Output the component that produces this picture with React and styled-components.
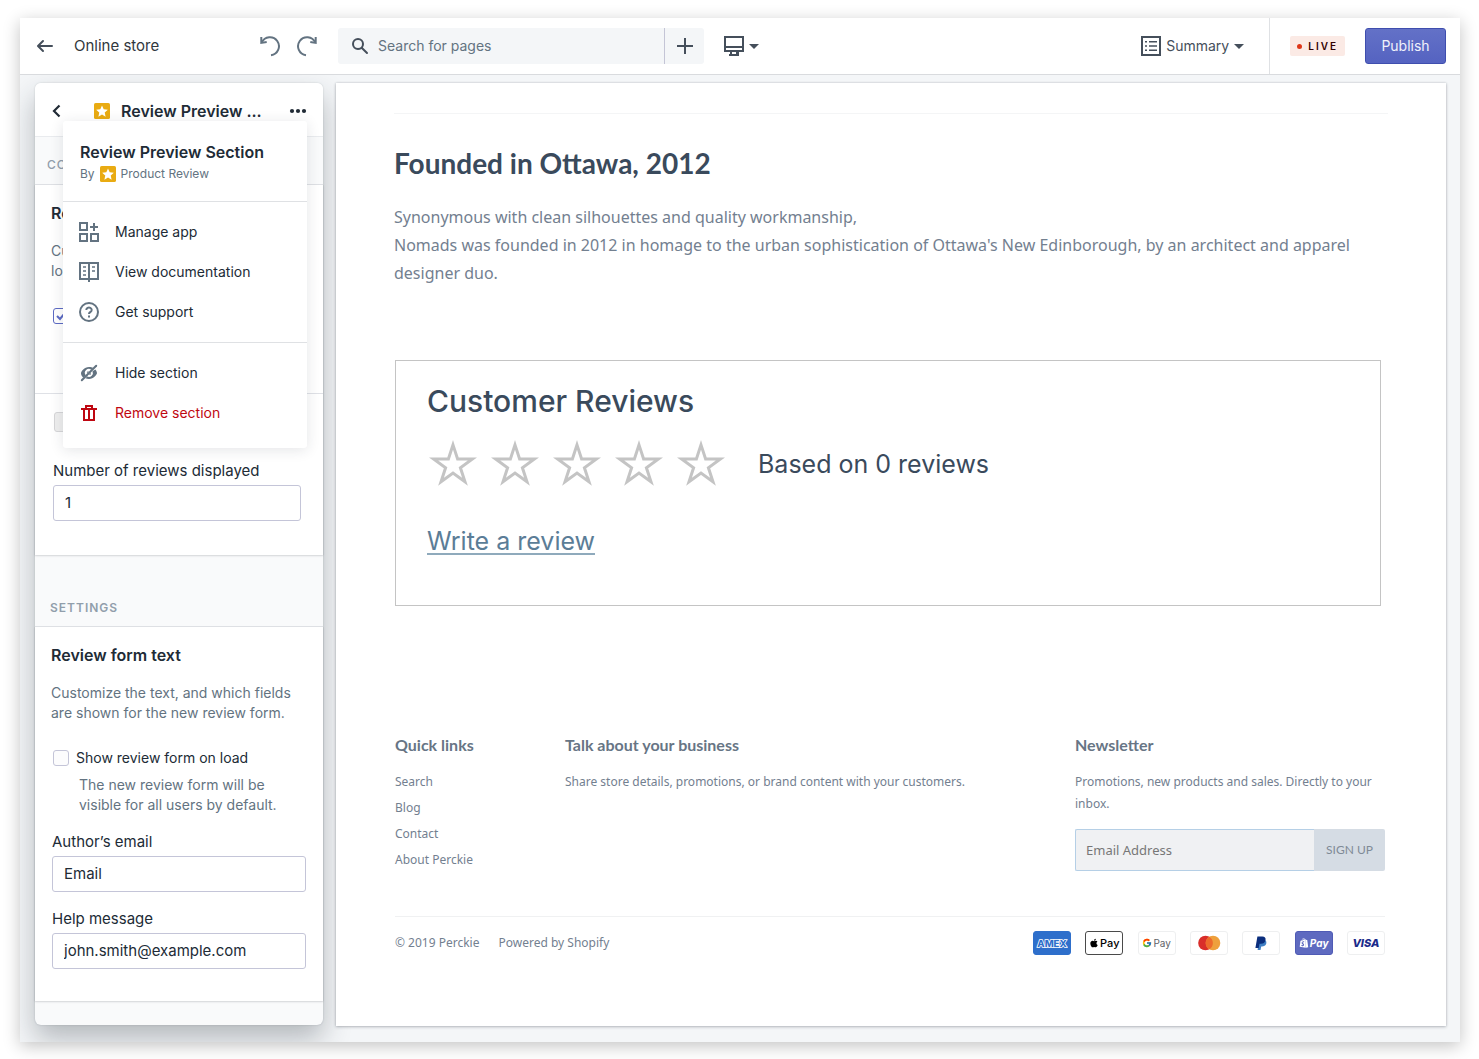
import React from "react";
import styled, { createGlobalStyle, css } from "styled-components";
import { FaApple, FaShopify } from "react-icons/fa";
import { FcGoogle } from "react-icons/fc";

const ui = `Inter, "Liberation Sans", sans-serif`;
const copy = `"Noto Sans", "Open Sans", sans-serif`;
const display = `Lato, "Liberation Sans", sans-serif`;

const Global = createGlobalStyle`
  *, *::before, *::after { box-sizing: border-box; }
  body { margin: 0; background: #fff; color: #212b36; font-family: ${ui}; font-size: 14px; line-height: 20px; }
  h1, h2, h3, p, ul { margin: 0; padding: 0; }
  ul { list-style: none; }
  button, input { font: inherit; color: inherit; margin: 0; }
  button { background: none; border: 0; padding: 0; cursor: pointer; }
  a { color: inherit; text-decoration: none; }
  svg { display: block; flex: none; }
`;

const Page = styled.div`
  min-height: 100vh;
  padding: 18px 19px 17px 20px;
  display: flex;
`;
const Window = styled.div`
  flex: 1;
  min-width: 0;
  display: flex;
  flex-direction: column;
  background: #f4f6f8;
  box-shadow: 0 4px 16px rgba(0, 0, 0, 0.24);
`;

/* top bar */
const TopBar = styled.header`
  display: flex;
  align-items: center;
  height: 57px;
  background: #fff;
  border-bottom: 1px solid #d9dbde;
  padding-right: 14px;
`;
const Back = styled.a`
  display: flex;
  align-items: center;
  gap: 19px;
  width: 240px;
  padding-left: 15px;
  color: #454f5b;
`;
const BackLabel = styled.span`
  color: #31373d;
  font-size: 15px;
`;
const History = styled.div`
  display: flex;
  gap: 15px;
  width: 78px;
  color: #637381;
`;
const SearchBar = styled.div`
  display: flex;
  flex: 0 1 366px;
  height: 36px;
  background: #f4f6f8;
  border-radius: 3px;
  color: #454f5b;
`;
const SearchField = styled.label`
  flex: 1;
  display: flex;
  align-items: center;
  gap: 8px;
  padding: 0 12px;
  border-right: 1px solid #c4c5d6;
`;
const SearchInput = styled.input`
  flex: 1;
  min-width: 0;
  background: none;
  border: 0;
  padding: 0;
  outline: 0;
  &::placeholder { color: #637381; opacity: 1; }
`;
const AddButton = styled.button`
  width: 39px;
  display: grid;
  place-items: center;
`;
const ToolButton = styled.button`
  display: flex;
  align-items: center;
  gap: 5px;
  color: #454f5b;
`;
const DeviceButton = styled(ToolButton)`
  margin-left: 20px;
`;
const BarEnd = styled.div`
  margin-left: auto;
  align-self: stretch;
  display: flex;
  align-items: center;
`;
const Publishing = styled.div`
  align-self: stretch;
  display: flex;
  align-items: center;
  gap: 20px;
  margin-left: 25px;
  padding-left: 20px;
  border-left: 1px solid #dfe1e4;
`;
const Live = styled.span`
  display: flex;
  align-items: center;
  gap: 6px;
  height: 20px;
  padding: 0 7px;
  border-radius: 2px;
  background: #fbeae5;
  color: #330101;
  font-size: 10px;
  font-weight: 600;
  letter-spacing: 2px;
  &::before {
    content: "";
    width: 5px;
    height: 5px;
    border-radius: 50%;
    background: #de3618;
  }
`;
const Publish = styled.button`
  width: 81px;
  height: 36px;
  border: 1px solid #3f4eae;
  border-radius: 3px;
  background: linear-gradient(#6371c7, #5563c1);
  color: #f1f2fb;
`;

/* workspace */
const Workspace = styled.div`
  flex: 1;
  display: flex;
  gap: 13px;
  padding: 8px 14px 16px 15px;
  overflow: hidden;
`;
const Sidebar = styled.aside`
  position: relative;
  flex: none;
  width: 288px;
  display: flex;
  flex-direction: column;
  margin-bottom: 1px;
  border-radius: 6px;
  background: #f9fafb;
  box-shadow: 0 0 2px rgba(33, 43, 54, 0.2), 0 14px 28px rgba(33, 43, 54, 0.3);
`;
const PanelHeader = styled.div`
  display: flex;
  align-items: center;
  height: 53px;
  padding: 3px 15px 0 12px;
  background: #fff;
  border-radius: 6px 6px 0 0;
`;
const IconButton = styled.button`
  width: 20px;
  height: 20px;
  display: grid;
  place-items: center;
  color: #212b36;
`;
const PanelTitle = styled.h1`
  flex: 1;
  display: flex;
  align-items: center;
  gap: 11px;
  margin-left: 27px;
  font-size: 16px;
  font-weight: 600;
  white-space: nowrap;
`;
const Band = styled.h2`
  height: ${(p) => (p.$tall ? 72 : 49)}px;
  padding: 0 ${(p) => (p.$tall ? 15 : 12)}px ${(p) => (p.$tall ? 8 : 9)}px;
  display: flex;
  align-items: flex-end;
  border: solid #e9ebee;
  border-width: ${(p) => (p.$tall ? "0 0 1px" : "1px 0")};
  color: #919eab;
  font-size: 12px;
  font-weight: ${(p) => (p.$tall ? 600 : 500)};
  letter-spacing: 1px;
`;
const Card = styled.section`
  background: #fff;
  box-shadow: 0 0 1px rgba(33, 43, 54, 0.24), 0 1px 2px rgba(33, 43, 54, 0.14);
`;
const Group = styled.div`
  display: flex;
  flex-direction: column;
  padding: 18px 17px 32px 16px;
  & + & { border-top: 1px solid #dfe1e6; }
`;
const OptionsGroup = styled(Group)`
  height: 208px;
`;
const CountGroup = styled(Group)`
  padding: 18px 22px 34px 17px;
  border-top: 1px solid #dfe1e6;
`;
const GroupTitle = styled.h3`
  font-size: 16px;
  font-weight: 600;
`;
const Note = styled.p`
  margin-top: 18px;
  color: #637381;
`;
const Hint = styled.p`
  padding: 7px 0 0 28px;
  color: #637381;
`;
const Check = styled.label`
  display: flex;
  align-items: center;
  gap: 7px;
  margin-top: ${(p) => p.$gap}px;
  padding-left: 2px;
  white-space: nowrap;
`;
const Tick = styled.input`
  appearance: none;
  flex: none;
  width: 16px;
  height: 16px;
  border: 1px solid #c4c5d8;
  border-radius: 3px;
  background: #fcfcfd;
  &:checked {
    border-color: #5c6ac4;
    background: url("data:image/svg+xml,%3Csvg xmlns='http://www.w3.org/2000/svg' viewBox='0 0 14 14'%3E%3Cpath d='M3 7l3 3 5-6' fill='none' stroke='%235c6ac4' stroke-width='2'/%3E%3C/svg%3E") center / 14px no-repeat;
  }
  &:disabled {
    width: 20px;
    height: 20px;
    background: #eee;
    border-color: #d6d6d8;
  }
`;
const Field = styled.label`
  display: flex;
  flex-direction: column;
  gap: 4px;
  margin-top: ${(p) => p.$gap}px;
  padding-left: 1px;
  font-size: 15px;
`;
const TextInput = styled.input`
  height: 36px;
  padding: 0 11px 1px;
  border: 1px solid #c4c5d8;
  border-radius: 3px;
  background: #fff;
`;

/* popover */
const Popover = styled.div`
  position: absolute;
  top: 38px;
  left: 28px;
  right: 16px;
  z-index: 2;
  background: #fff;
  border-radius: 3px;
  box-shadow: 0 2px 14px rgba(33, 43, 54, 0.12);
`;
const PopHeader = styled.div`
  height: 80px;
  padding: 21px 17px 0;
`;
const Byline = styled.p`
  display: flex;
  align-items: center;
  gap: 5px;
  padding-top: 2px;
  color: #637381;
  font-size: 12px;
`;
const Menu = styled.ul`
  padding: 10px 16px;
  border-top: 1px solid #dfe1e4;
  &:last-child { padding-bottom: 15px; }
`;
const MenuItem = styled.button`
  display: flex;
  align-items: center;
  gap: 16px;
  width: 100%;
  height: 40px;
  color: #637381;
  ${(p) => p.$danger && css`color: #bf0711;`}
`;
const MenuText = styled.span`
  color: ${(p) => (p.$danger ? "#bf0711" : "#212b36")};
`;

/* preview */
const Preview = styled.main`
  flex: 1;
  min-width: 0;
  position: relative;
  padding: 30px 58px 56px;
  background: #fff;
  color: #738090;
  font-family: ${copy};
  box-shadow: 0 0 2px rgba(33, 43, 54, 0.2), 0 1px 3px rgba(33, 43, 54, 0.25);
`;
const Story = styled.section`
  border-top: 1px solid #f4f5f6;
  padding-top: 31px;
  font-size: 16px;
  line-height: 28px;
`;
const StoryTitle = styled.h2`
  margin-bottom: 22px;
  color: #3a4a5c;
  font: 700 28px/36px ${display};
`;
const Reviews = styled.section`
  margin: 73px 7px 0 1px;
  height: 246px;
  padding: 23px 31px;
  border: 1px solid #c4c4c4;
  color: #3a4a5c;
  font-family: ${ui};
`;
const ReviewsTitle = styled.h2`
  font-size: 30px;
  font-weight: 500;
  line-height: 34px;
`;
const Rating = styled.div`
  display: flex;
  align-items: center;
  gap: 33px;
  margin: 22px 0 41px;
  padding-left: 2px;
  font-size: 25px;
  line-height: 48px;
`;
const Stars = styled.div`
  display: flex;
  gap: 14px;
`;
const WriteLink = styled.a`
  display: inline-block;
  border-bottom: 2px solid #8faabc;
  color: #5b7d97;
  font-size: 25px;
  line-height: 24px;
`;
const Footer = styled.footer`
  margin: 128px 3px 0 1px;
  font-size: 12px;
  line-height: 22px;
`;
const Columns = styled.div`
  display: grid;
  grid-template-columns: 170px 1fr 310px;
  padding-bottom: 43px;
  border-bottom: 1px solid #f0f1f2;
`;
const FooterTitle = styled.h3`
  margin-bottom: 15px;
  color: #677585;
  font: 700 16px/22px ${display};
`;
const Links = styled.ul`
  line-height: 26px;
  margin-top: -2px;
`;
const Signup = styled.form`
  display: flex;
  height: 42px;
  margin-top: 14px;
  font-size: 13px;
`;
const SignupInput = styled.input`
  flex: 1;
  min-width: 0;
  padding: 0 10px;
  border: 1px solid #b5cfe6;
  border-right: 0;
  border-radius: 2px 0 0 2px;
  background: #f0f1f3;
  &::placeholder { color: #777; opacity: 1; }
`;
const SignupButton = styled.button`
  width: 71px;
  background: #d5dce4;
  border-radius: 0 2px 2px 0;
  color: #7f8a96;
  font: 12px/20px ${display};
`;
const Legal = styled.div`
  display: flex;
  align-items: center;
  gap: 19px;
  padding-top: 14px;
`;
const Payments = styled.ul`
  display: flex;
  justify-content: space-between;
  width: 352px;
  margin-left: auto;
`;
const Pay = styled.li`
  display: flex;
  align-items: center;
  justify-content: center;
  gap: 1px;
  width: 38px;
  height: 24px;
  border: 1px solid ${(p) => p.$line || "#eeeff0"};
  border-radius: 3px;
  background: ${(p) => p.$fill || "#fff"};
  color: ${(p) => p.$ink || "#000"};
  font: ${(p) => p.$weight || 500} ${(p) => p.$size || 10}px/12px ${ui};
`;
const Slanted = styled.span`
  font-style: italic;
`;

const Icon = ({ size = 20, children }) => (
  <svg width={size} height={size} viewBox="0 0 20 20" fill="currentColor" aria-hidden="true">
    {children}
  </svg>
);
const Caret = () => (
  <svg width="10" height="5" viewBox="0 0 10 5" fill="currentColor" aria-hidden="true">
    <path d="M0 0h10L5 5z" />
  </svg>
);
const Undo = ({ flip }) => (
  <svg width="21" height="22" viewBox="0 0 21 22" fill="none" stroke="currentColor" strokeWidth="2" aria-hidden="true">
    <g transform={flip ? "translate(21 0) scale(-1 1)" : undefined}>
      <path d="M1.300 2v5.900l5.400-1" />
      <path d="M1.800 7.400A9 9 0 1 1 11 20.200" />
    </g>
  </svg>
);
const AppBadge = () => (
  <Icon size={16}>
    <rect width="20" height="20" rx="2" fill="#e9ab12" />
    <path fill="#fff" d="M10 3l2.100 4.900 5.200.5-3.900 3.500 1.100 5.200L10 14.400l-4.500 2.700 1.100-5.200-3.900-3.500 5.200-.5z" />
  </Icon>
);
const EmptyStar = () => (
  <svg width="48" height="48" viewBox="0 0 48 48" fill="none" stroke="#c4c4c4" strokeWidth="3" aria-hidden="true">
    <path d="M24 4.900L28.600 19H43.400L31.400 27.700L36 41.800L24 33.100L12 41.800L16.600 27.700L4.600 19H19.400Z" />
  </svg>
);

const menuIcons = {
  apps: (
    <g fill="none" stroke="currentColor" strokeWidth="2">
      <path d="M1 1h7v7H1zM1 12h7v7H1zM12 12h7v7h-7zM15 1v8M11 5h8" />
    </g>
  ),
  docs: (
    <g fill="none" stroke="currentColor" strokeWidth="2">
      <path d="M1 1h18v16H1zM10 1v19" />
      <path d="M4 5h3M4 9h3M4 13h3M13 5h3M13 9h3" strokeWidth="1.600" />
    </g>
  ),
  help: (
    <g fill="none" stroke="currentColor" strokeWidth="2">
      <circle cx="10" cy="10" r="9" />
      <path d="M7.300 8a2.700 2.400 0 1 1 4.100 2c-.9.5-1.400.8-1.400 2M10 13.600v2" />
    </g>
  ),
  hide: (
    <g>
      <path d="M10 4c2 0 3 .4 4.100.9L12.300 6.700A4 4 0 0 0 6.700 12.300L4.300 14.700C2.700 13.300 2 11.500 2 10.300 2 8.600 5.300 4 10 4z" />
      <path d="M16.400 6.400C17.500 7.700 18 9.200 18 10c0 1.500-3.300 6-8 6-1.300 0-2.500-.3-3.500-.8l1.700-1.700A4 4 0 0 0 13.500 8.200z" />
      <path d="M9.900 8a2 2 0 0 0-1.900 2.600zM10 12a2 2 0 0 0 2-2.300z" />
      <path d="M2.800 17.200L17.200 2.800" fill="none" stroke="currentColor" strokeWidth="2" strokeLinecap="round" />
    </g>
  ),
  trash: (
    <g fill="none" stroke="currentColor" strokeWidth="2">
      <path d="M2 6h16M7 6V3h6v3M5 6v11h10V6" />
      <path d="M10 7v9" />
    </g>
  ),
};

const Item = ({ icon, danger, children }) => (
  <li>
    <MenuItem type="button" $danger={danger}>
      <Icon>{menuIcons[icon]}</Icon>
      <MenuText $danger={danger}>{children}</MenuText>
    </MenuItem>
  </li>
);

const links = ["Search", "Blog", "Contact", "About Perckie"];

export default function App() {
  return (
    <Page>
      <Global />
      <Window>
        <TopBar>
          <Back href="#">
            <Icon>
              <path d="M17 9H5.414l3.293-3.293a.999.999 0 1 0-1.414-1.414l-5 5a.999.999 0 0 0 0 1.414l5 5a.997.997 0 0 0 1.414 0 .999.999 0 0 0 0-1.414L5.414 11H17a1 1 0 1 0 0-2z" />
            </Icon>
            <BackLabel>Online store</BackLabel>
          </Back>
          <History>
            <button type="button" aria-label="Undo"><Undo /></button>
            <button type="button" aria-label="Redo"><Undo flip /></button>
          </History>
          <SearchBar>
            <SearchField>
              <Icon>
                <path d="M8 12a4 4 0 1 1 0-8 4 4 0 0 1 0 8zm9.707 4.293-4.820-4.820A5.968 5.968 0 0 0 14 8a6 6 0 1 0-6 6 5.968 5.968 0 0 0 3.473-1.113l4.820 4.820a1 1 0 0 0 1.414-1.414z" />
              </Icon>
              <SearchInput type="text" placeholder="Search for pages" aria-label="Search for pages" />
            </SearchField>
            <AddButton type="button" aria-label="Add page">
              <Icon><path d="M9 2h2v7h7v2h-7v7H9v-7H2V9h7z" /></Icon>
            </AddButton>
          </SearchBar>
          <DeviceButton type="button" aria-label="Desktop view">
            <Icon>
              <path d="M0 0h20v16h-5v2h0V20H5v-2h1v-2H0zM2 2v8h16V2zM2 12v2h16v-2zM8 16v2h4v-2z" fillRule="evenodd" />
            </Icon>
            <Caret />
          </DeviceButton>
          <BarEnd>
            <ToolButton type="button">
              <Icon>
                <path d="M0 0h20v20H0zM2 2v16h16V2zM4 5h2v1.600H4zM8 5h8v1.600H8zM4 9.200h2v1.600H4zM8 9.200h8v1.600H8zM4 13.400h2V15H4zM8 13.400h8V15H8z" fillRule="evenodd" />
              </Icon>
              Summary
              <Caret />
            </ToolButton>
            <Publishing>
              <Live>LIVE</Live>
              <Publish type="button">Publish</Publish>
            </Publishing>
          </BarEnd>
        </TopBar>

        <Workspace>
          <Sidebar>
            <PanelHeader>
              <IconButton type="button" aria-label="Back">
                <Icon>
                  <path d="M12.500 4.500L7 10l5.500 5.500" fill="none" stroke="currentColor" strokeWidth="2.200" />
                </Icon>
              </IconButton>
              <PanelTitle><AppBadge />Review Preview ...</PanelTitle>
              <IconButton type="button" aria-label="More actions">
                <Icon>
                  <circle cx="4" cy="10" r="2.100" /><circle cx="10" cy="10" r="2.100" /><circle cx="16" cy="10" r="2.100" />
                </Icon>
              </IconButton>
            </PanelHeader>
            <Band>CO</Band>
            <Card>
              <OptionsGroup>
                <GroupTitle>Re</GroupTitle>
                <Note>Cu<br />lo</Note>
                <Check $gap={27}><Tick type="checkbox" defaultChecked aria-label="Customize" /></Check>
              </OptionsGroup>
              <CountGroup>
                <Check $gap={0}><Tick type="checkbox" disabled aria-label="Unavailable" /></Check>
                <Field $gap={29}>
                  Number of reviews displayed
                  <TextInput defaultValue="1" />
                </Field>
              </CountGroup>
            </Card>
            <Band $tall>SETTINGS</Band>
            <Card>
              <Group>
                <GroupTitle>Review form text</GroupTitle>
                <Note>Customize the text, and which fields are shown for the new review form.</Note>
                <Check $gap={25}><Tick type="checkbox" />Show review form on load</Check>
                <Hint>The new review form will be visible for all users by default.</Hint>
                <Field $gap={17}>Author’s email<TextInput defaultValue="Email" /></Field>
                <Field $gap={17}>Help message<TextInput defaultValue="john.smith@example.com" /></Field>
              </Group>
            </Card>
            <Popover>
              <PopHeader>
                <GroupTitle as="h2">Review Preview Section</GroupTitle>
                <Byline>By <AppBadge /> Product Review</Byline>
              </PopHeader>
              <Menu>
                <Item icon="apps">Manage app</Item>
                <Item icon="docs">View documentation</Item>
                <Item icon="help">Get support</Item>
              </Menu>
              <Menu>
                <Item icon="hide">Hide section</Item>
                <Item icon="trash" danger>Remove section</Item>
              </Menu>
            </Popover>
          </Sidebar>

          <Preview>
            <Story>
              <StoryTitle>Founded in Ottawa, 2012</StoryTitle>
              <p>
                Synonymous with clean silhouettes and quality workmanship,<br />
                Nomads was founded in 2012 in homage to the urban sophistication of Ottawa's New Edinborough, by an architect and apparel designer duo.
              </p>
            </Story>
            <Reviews>
              <ReviewsTitle>Customer Reviews</ReviewsTitle>
              <Rating>
                <Stars>{[1, 2, 3, 4, 5].map((n) => <EmptyStar key={n} />)}</Stars>
                Based on 0 reviews
              </Rating>
              <WriteLink href="#">Write a review</WriteLink>
            </Reviews>
            <Footer>
              <Columns>
                <div>
                  <FooterTitle>Quick links</FooterTitle>
                  <Links>{links.map((l) => <li key={l}><a href="#">{l}</a></li>)}</Links>
                </div>
                <div>
                  <FooterTitle>Talk about your business</FooterTitle>
                  <p>Share store details, promotions, or brand content with your customers.</p>
                </div>
                <div>
                  <FooterTitle>Newsletter</FooterTitle>
                  <p>Promotions, new products and sales. Directly to your inbox.</p>
                  <Signup>
                    <SignupInput type="email" placeholder="Email Address" aria-label="Email Address" />
                    <SignupButton type="button">SIGN UP</SignupButton>
                  </Signup>
                </div>
              </Columns>
              <Legal>
                <span>© 2019 Perckie</span>
                <a href="#">Powered by Shopify</a>
                <Payments>
                  <Pay $fill="#2e6fcb" $line="#2e6fcb" $ink="#fff" $weight={800}>
                    <svg width="32" height="12" viewBox="0 0 32 12" role="img" aria-label="Amex">
                      <text x="16" y="9.500" textAnchor="middle" fontFamily={ui} fontSize="9.500" fontWeight="800" fill="#2e6fcb" stroke="#fff" strokeWidth="1.600" paintOrder="stroke">AMEX</text>
                    </svg>
                  </Pay>
                  <Pay $line="#4a4a4a" $size={11}><FaApple size={10} />Pay</Pay>
                  <Pay $ink="#5f6368" $weight={400}><FcGoogle size={10} />Pay</Pay>
                  <Pay>
                    <svg width="24" height="16" viewBox="0 0 24 16" role="img" aria-label="Mastercard">
                      <circle cx="8.500" cy="8" r="7.300" fill="#d92d2a" />
                      <circle cx="16" cy="8" r="7.300" fill="#eea03c" />
                      <path d="M12.250 1.700a7.300 7.300 0 0 1 0 12.600a7.300 7.300 0 0 1 0-12.600z" fill="#ed6a2c" />
                    </svg>
                  </Pay>
                  <Pay>
                    <svg width="12" height="15" viewBox="0 0 12 15" role="img" aria-label="PayPal">
                      <path d="M4 4h5.800c1.700.8 1.800 2.300 1.400 3.700-.6 2-2.200 2.700-4.200 2.700h-.8L5.500 14H2.600z" fill="#3f7fc4" />
                      <path d="M2.400.6h5c2.300 0 3.600 1.200 3.100 3.600C10 6.700 8.300 7.700 6 7.700H4.500L3.700 12H.4z" fill="#0b2e7d" />
                    </svg>
                  </Pay>
                  <Pay $fill="#5e6ac0" $line="#4f5bb5" $ink="#fff" $weight={700}><FaShopify size={10} /><Slanted>Pay</Slanted></Pay>
                  <Pay $ink="#1a2a8a" $weight={800} $size={11}><Slanted>VISA</Slanted></Pay>
                </Payments>
              </Legal>
            </Footer>
          </Preview>
        </Workspace>
      </Window>
    </Page>
  );
}
